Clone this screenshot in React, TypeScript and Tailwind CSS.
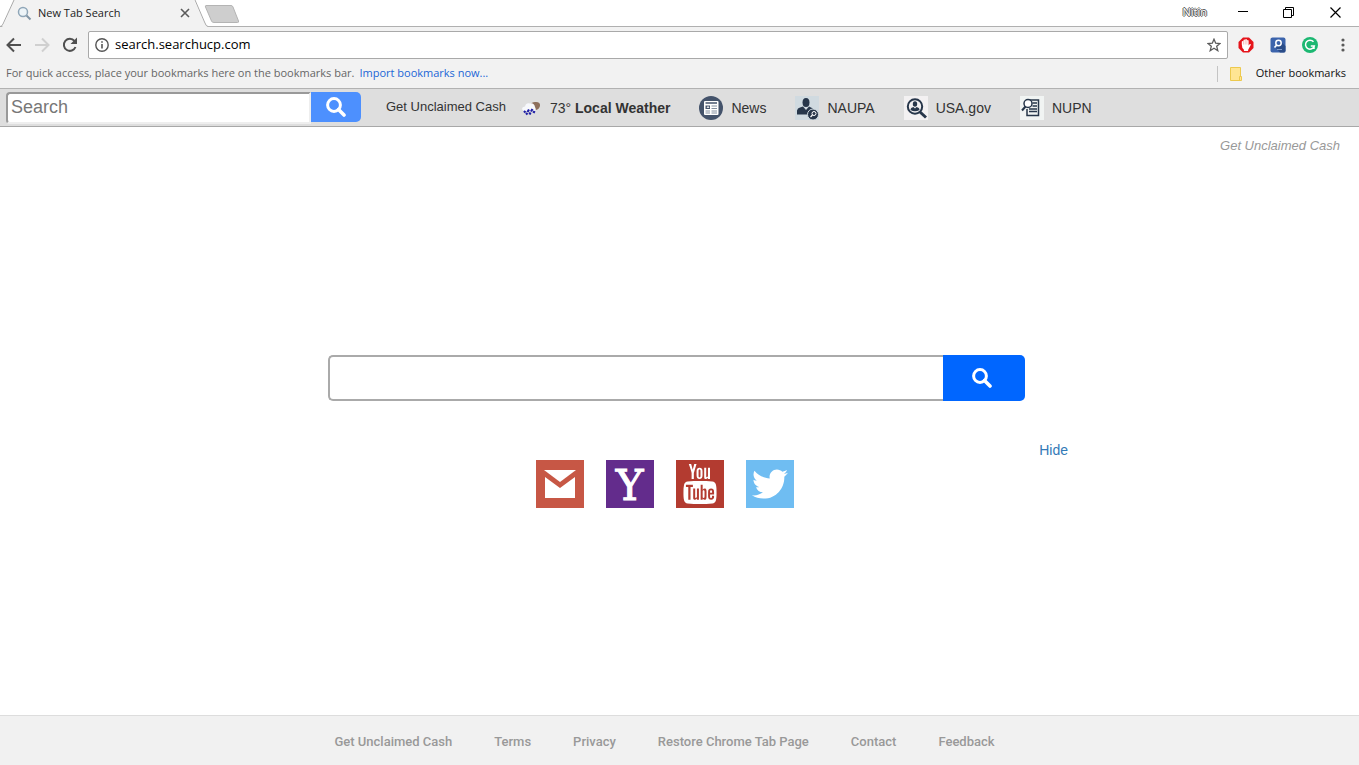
import type { ReactNode } from 'react';
import { FaTwitter } from 'react-icons/fa';
import { TfiYoutube } from 'react-icons/tfi';

const footerLinks = ['Get Unclaimed Cash', 'Terms', 'Privacy', 'Restore Chrome Tab Page', 'Contact', 'Feedback'];

function SearchIcon() {
  return (
    <svg width="20" height="20" viewBox="0 0 20 20" fill="none" stroke="currentColor" aria-hidden="true">
      <circle cx="8" cy="8" r="6.400" strokeWidth="3" />
      <path d="M12.500 12.500 L18 18" strokeWidth="3.600" strokeLinecap="round" />
    </svg>
  );
}

function TabStrip() {
  return (
    <div className="flex h-[27px] items-stretch justify-between bg-white shadow-[inset_0_-1px_0_#b0b0b0]">
      <div className="flex">
        <div className="relative w-[208px]">
          <svg className="absolute inset-0" width="208" height="27" viewBox="0 0 208 27" aria-hidden="true">
            <path d="M2 27 L4 24 L14 0 H194 L204 22 Q206 26.500 208 26.500 V27 Z" fill="#f2f2f2" />
            <path d="M0 26.500 Q2 26.500 3 24 L14 0 M195 0 L204.500 22 Q206 26.500 208 26.500" fill="none" stroke="#a9a9a9" />
          </svg>
          <div className="relative flex h-[26px] items-center pl-[17px]">
            <svg width="15" height="15" viewBox="0 0 15 15" fill="none" aria-hidden="true">
              <circle cx="6" cy="6" r="4.500" fill="#edf4f8" stroke="#8fa6b8" strokeWidth="1.500" />
              <path d="M9.500 9.500 L13.500 13.500" stroke="#8195a5" strokeWidth="2" />
            </svg>
            <span className="ml-[6px] flex-1 text-[11px] text-[#222]">New Tab Search</span>
            <button aria-label="Close tab" className="mr-[18px]">
              <svg width="10" height="10" viewBox="0 0 10 10" stroke="#5a5a5a" strokeWidth="1.600" aria-hidden="true">
                <path d="M1 1 L9 9 M9 1 L1 9" />
              </svg>
            </button>
          </div>
        </div>
        <button aria-label="New tab" className="-ml-1 flex items-start pt-1">
          <svg width="36" height="19" viewBox="0 0 36 19" aria-hidden="true">
            <path d="M2 1.500 H27 Q28.500 1.500 29 3 L34.500 17 Q35 18.500 33.500 18.500 H10 Q8 18.500 7.500 17 L1.500 3 Q1 1.500 2 1.500 Z" fill="#cecece" stroke="#b4b4b4" />
          </svg>
        </button>
      </div>
      <div className="flex h-6 items-center text-black">
        <span className="mr-[31px] text-[11px] text-white [text-shadow:-1px_0_#555,1px_0_#555,0_-1px_#555,0_1px_#555]">Nitin</span>
        <button aria-label="Minimize" className="mr-[34px]">
          <svg width="11" height="11" viewBox="0 0 11 11" aria-hidden="true"><path d="M0 4.500 H10" stroke="black" /></svg>
        </button>
        <button aria-label="Restore" className="mr-9">
          <svg width="11" height="11" viewBox="0 0 11 11" fill="none" stroke="black" aria-hidden="true">
            <path d="M0.500 2.500 H8.500 V10.500 H0.500 Z M2.500 2.500 V0.500 H10.500 V8.500 H8.500" />
          </svg>
        </button>
        <button aria-label="Close" className="mr-[18px]">
          <svg width="11" height="11" viewBox="0 0 11 11" stroke="black" strokeWidth="1.200" aria-hidden="true"><path d="M0.500 0.500 L10.500 10.500 M10.500 0.500 L0.500 10.500" /></svg>
        </button>
      </div>
    </div>
  );
}

function AddressBar() {
  return (
    <div className="flex h-9 items-center pl-[6px] pr-[11px]">
      <button aria-label="Back" className="mr-3">
        <svg width="16" height="16" viewBox="0 0 16 16" fill="none" stroke="#505050" strokeWidth="2" aria-hidden="true">
          <path d="M15 8 H2 M8 1.500 L1.500 8 L8 14.500" />
        </svg>
      </button>
      <button aria-label="Forward" className="mr-3">
        <svg width="16" height="16" viewBox="0 0 16 16" fill="none" stroke="#d0d0d0" strokeWidth="2" aria-hidden="true">
          <path d="M1 8 H14 M8 1.500 L14.500 8 L8 14.500" />
        </svg>
      </button>
      <button aria-label="Reload" className="mr-[10px]">
        <svg width="16" height="16" viewBox="0 0 16 16" fill="none" aria-hidden="true">
          <path d="M13.500 10 A6 6 0 1 1 12.500 4" stroke="#505050" strokeWidth="2" />
          <path d="M15 0.500 V7 H8.500 Z" fill="#505050" />
        </svg>
      </button>
      <div className="flex h-7 flex-1 items-center rounded-[2px] border border-[#a9a9a9] bg-white pl-[6px] pr-[6px]">
        <svg width="14" height="14" viewBox="0 0 14 14" fill="none" stroke="#555" aria-hidden="true">
          <circle cx="7" cy="7" r="6.200" strokeWidth="1.400" />
          <path d="M7 6 V10.500 M7 3.200 V4.800" strokeWidth="1.600" />
        </svg>
        <input aria-label="Address" defaultValue="search.searchucp.com" className="ml-[6px] min-w-0 flex-1 bg-transparent text-[13px] text-black outline-none" />
        <button aria-label="Bookmark this page">
          <svg width="14" height="14" viewBox="0 0 14 14" fill="none" stroke="#5a5a5a" strokeWidth="1.300" aria-hidden="true">
            <path d="M7 1.200 L8.700 5.200 L13 5.500 L9.700 8.300 L10.800 12.700 L7 10.300 L3.200 12.700 L4.300 8.300 L1 5.500 L5.300 5.200 Z" />
          </svg>
        </button>
      </div>
      <div className="ml-[10px] flex items-center gap-4">
        <button aria-label="Ad blocker">
          <svg width="16" height="16" viewBox="0 0 16 16" aria-hidden="true">
            <path d="M5 0.500 H11 L15.500 5 V11 L11 15.500 H5 L0.500 11 V5 Z" fill="#e5141b" />
            <path d="M3.800 7.500 V4.500 Q4.600 3.500 5.500 4.500 V3 Q6.300 2 7.200 3 V2.500 Q8 1.600 8.900 2.500 V3.500 Q9.700 2.600 10.600 3.500 V8.500 L11.500 7.300 Q12.700 6.800 12.900 7.700 L10.300 12.500 L10 14 H6 L5.800 12.500 Q3.800 11 3.800 7.500 Z" fill="white" />
            <path d="M5.500 4.500 V7.500 M7.200 3 V7.500 M8.900 3.500 V7.500" stroke="#f08a8a" strokeWidth="0.500" />
          </svg>
        </button>
        <button aria-label="Search extension">
          <svg width="16" height="16" viewBox="0 0 16 16" fill="none" aria-hidden="true">
            <rect x="0.500" y="0.500" width="15" height="15" rx="2" fill="#3c64ac" />
            <path d="M6 11 L10 15.500 H14 Q15.500 15.500 15.500 14 V9 L11 5 Z" fill="#2a4c88" />
            <circle cx="8.500" cy="6" r="2.700" stroke="white" strokeWidth="1.500" />
            <path d="M6.700 8 L4.500 10.500" stroke="white" strokeWidth="1.700" />
            <path d="M7 12.500 H12" stroke="#7f9ac9" />
          </svg>
        </button>
        <button aria-label="Grammar checker">
          <svg width="16" height="16" viewBox="0 0 16 16" fill="none" aria-hidden="true">
            <circle cx="8" cy="8" r="8" fill="#1cb872" />
            <path d="M11.500 4.800 A4.500 4.500 0 1 0 12.300 9 H8.800 M12 8.500 V12" stroke="white" strokeWidth="1.500" />
          </svg>
        </button>
        <button aria-label="Menu" className="ml-1">
          <svg width="10" height="14" viewBox="0 0 10 14" fill="#5a5a5a" aria-hidden="true">
            <circle cx="5" cy="2" r="1.600" /><circle cx="5" cy="7" r="1.600" /><circle cx="5" cy="12" r="1.600" />
          </svg>
        </button>
      </div>
    </div>
  );
}

function BookmarksBar() {
  return (
    <div className="flex h-[26px] items-center justify-between border-b border-[#b2b2b2] pb-1 pl-[6px] pr-[13px] text-[11px]">
      <p className="text-[#666]">
        For quick access, place your bookmarks here on the bookmarks bar.
        <a href="#" className="ml-[5px] text-[#1a66d6]">Import bookmarks now...</a>
      </p>
      <button className="flex items-center text-[#111]">
        <span className="mr-3 h-4 w-px bg-[#c4c4c4]" />
        <svg className="mr-[14px]" width="12" height="14" viewBox="0 0 12 14" aria-hidden="true">
          <path d="M0.500 0.500 H10.500 V9.500 H11.500 V13.500 H0.500 Z" fill="#ffe593" stroke="#ecc94e" />
          <path d="M9.500 13 V9.500 H11" fill="none" stroke="#ecc94e" />
        </svg>
        Other bookmarks
      </button>
    </div>
  );
}

function ToolbarLink({ icon, children }: { icon: ReactNode; children: ReactNode }) {
  return (
    <a href="#" className="flex items-center gap-2">
      {icon}
      <span>{children}</span>
    </a>
  );
}

function NewsIcon() {
  return (
    <svg width="24" height="24" viewBox="0 0 24 24" aria-hidden="true">
      <circle cx="12" cy="12" r="12" fill="#44536b" />
      <rect x="5" y="5" width="14.500" height="14" rx="1" fill="white" />
      <path d="M6.500 7 H18" stroke="#44536b" strokeWidth="1.500" />
      <path d="M6.500 9.500 H11 V13 H6.500 Z" fill="#44536b" />
      <path d="M12.500 10 H18 M12.500 12.500 H18 M6.500 15 H11 M12.500 15 H18 M6.500 17 H11 M12.500 17 H18" stroke="#8490a0" />
      <path d="M8 12 L9 10.500 L10 12" fill="none" stroke="white" />
    </svg>
  );
}

function NaupaIcon() {
  return (
    <svg width="24" height="24" viewBox="0 0 24 24" fill="none" aria-hidden="true">
      <rect width="24" height="24" fill="#d0dae0" />
      <ellipse cx="11" cy="6.500" rx="3.500" ry="4.500" fill="#27364a" />
      <path d="M2 18.500 V14.500 Q2.500 12 5 11.500 L8 10.500 L11 14 L14 10.500 L17 12 Q19 13 19 18.500 Z" fill="#27364a" />
      <circle cx="18" cy="18.500" r="5.500" fill="#27364a" stroke="#d0dae0" />
      <circle cx="19" cy="17.500" r="2" stroke="white" />
      <path d="M17.500 19 L15.500 21" stroke="white" strokeWidth="1.300" />
    </svg>
  );
}

function UsaIcon() {
  return (
    <svg width="24" height="24" viewBox="0 0 24 24" fill="none" aria-hidden="true">
      <rect width="24" height="24" fill="#f3f1f2" />
      <circle cx="11" cy="10.500" r="7.200" stroke="#27364a" strokeWidth="2" />
      <path d="M16 16 L22 21.500" stroke="#27364a" strokeWidth="3" />
      <ellipse cx="11" cy="8" rx="2.200" ry="2.800" fill="#27364a" />
      <path d="M6.500 14 Q6.500 11.500 9.500 11 L11 12.500 L12.500 11 Q15.500 11.500 15.500 14 Q11 16.500 6.500 14 Z" fill="#27364a" />
    </svg>
  );
}

function NupnIcon() {
  return (
    <svg width="24" height="24" viewBox="0 0 24 24" fill="none" aria-hidden="true">
      <rect width="24" height="24" fill="#f1f4f3" />
      <path d="M10 4 H18.500 V19.500 H7 V13" stroke="#27364a" strokeWidth="1.500" />
      <path d="M12.500 7 H17 M12.500 10 H17 M9 13 H17 M9 15.500 H17" stroke="#27364a" strokeWidth="1.300" />
      <circle cx="8" cy="7.500" r="4" fill="white" stroke="#27364a" strokeWidth="1.500" />
      <path d="M5.500 10.500 L2 14.500" stroke="#27364a" strokeWidth="2" />
    </svg>
  );
}

function WeatherIcon() {
  return (
    <svg width="21" height="16" viewBox="0 0 21 16" aria-hidden="true">
      <path d="M9 5 Q11 1.500 15 2 Q19.500 2 19 6 Q18 9.500 15 10 H10 Z" fill="#8d6f5c" />
      <path d="M1.500 10 Q0 7 4 6.500 Q5 2.500 9 3.500 Q13 2.500 14 7 Q16 11 13 11 H3 Z" fill="#f7f8fc" />
      <path d="M3 12.500 L4.500 11 M6.500 12 L8 9.500 M10 11.500 L11.500 9 M5 14.500 L6.500 13 M8.500 14.500 L9.500 12.500 M12.500 13 L13.500 11" stroke="#1f1fa5" strokeWidth="2.200" />
    </svg>
  );
}

function SearchToolbar() {
  return (
    <div className="flex h-[38px] items-center border-b border-[#a8a8a8] bg-[#dedede] pl-[6px] text-sm text-[#333]">
      <form className="flex items-start" onSubmit={(e) => e.preventDefault()}>
        <input
          aria-label="Search"
          placeholder="Search"
          className="h-8 w-[305px] rounded-l-[4px] border-2 border-b-[#eee] border-l-[#999] border-r-[#eee] border-t-[#999] bg-white px-[3px] text-lg outline-none placeholder:text-[#777]"
        />
        <button aria-label="Search" className="flex h-[30px] w-[50px] items-center justify-center rounded-r-[5px] bg-[#4d90fe] text-white">
          <SearchIcon />
        </button>
      </form>
      <a href="#" className="ml-[25px] mr-[15px] text-[13px]">Get Unclaimed Cash</a>
      <div className="flex items-center gap-[29px]">
        <ToolbarLink icon={<WeatherIcon />}>
          73° <b>Local Weather</b>
        </ToolbarLink>
        <ToolbarLink icon={<NewsIcon />}>News</ToolbarLink>
        <ToolbarLink icon={<NaupaIcon />}>NAUPA</ToolbarLink>
        <ToolbarLink icon={<UsaIcon />}>USA.gov</ToolbarLink>
        <ToolbarLink icon={<NupnIcon />}>NUPN</ToolbarLink>
      </div>
    </div>
  );
}

function Shortcuts() {
  return (
    <nav className="flex gap-[22px] pr-[30px]">
      <a href="#" aria-label="Gmail" className="size-12 bg-[#c75745]">
        <svg viewBox="0 0 48 48" fill="white" aria-hidden="true">
          <path d="M8 10 H40 L24 22 Z" />
          <path d="M9 17 L24 28 L39 17 V38 H9 Z" />
        </svg>
      </a>
      <a href="#" aria-label="Yahoo" className="flex size-12 items-center justify-center bg-[#632c8c] pt-1 font-['DejaVu_Serif',serif] text-[42px] leading-none text-white [-webkit-text-stroke:1px_white]">
        Y
      </a>
      <a href="#" aria-label="YouTube" className="flex size-12 items-center justify-center bg-[#b33b30] text-white">
        <TfiYoutube size={40} />
      </a>
      <a href="#" aria-label="Twitter" className="flex size-12 items-center justify-center bg-[#6fbdf2] text-white">
        <FaTwitter size={36} />
      </a>
    </nav>
  );
}

export default function App() {
  return (
    <div className="flex min-h-screen flex-col bg-white font-['Liberation_Sans',Arial,sans-serif]">
      <header className="bg-[#f2f2f2] font-['Open_Sans','Noto_Sans',sans-serif]">
        <TabStrip />
        <AddressBar />
        <BookmarksBar />
      </header>
      <SearchToolbar />

      <main className="flex flex-1 flex-col">
        <p className="pr-[19px] pt-[9px] text-right text-[13px] leading-5 text-[#999]">
          <a href="#" className="italic">Get Unclaimed Cash</a>
        </p>
        <form className="mx-auto mt-[199px] flex w-full max-w-[703px] pr-[6px]" onSubmit={(e) => e.preventDefault()}>
          <input aria-label="Search the web" className="h-[46px] min-w-0 flex-1 rounded-l-[5px] border-2 border-r-0 border-[#aaa] px-3 text-lg outline-none" />
          <button aria-label="Search the web" className="flex w-[82px] items-center justify-center rounded-r-[5px] bg-[#0066ff] pr-1 text-white">
            <SearchIcon />
          </button>
        </form>
        <div className="mx-auto mt-[39px] flex w-full max-w-[777px] flex-col items-center">
          <a href="#" className="self-end text-sm leading-5 text-[#337ab7]">Hide</a>
          <Shortcuts />
        </div>
      </main>

      <footer className="flex h-[50px] items-center justify-center gap-[42px] border-t border-[#ddd] bg-[#f1f1f1] pr-[30px] pt-[2px] font-[Roboto,sans-serif] text-[13px] font-medium text-[#999]">
        {footerLinks.map((label) => (
          <a key={label} href="#">{label}</a>
        ))}
      </footer>
    </div>
  );
}
